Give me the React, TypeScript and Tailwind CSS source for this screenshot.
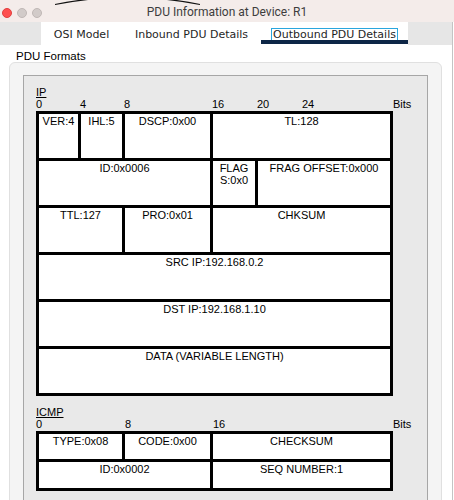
import React from "react";

function Cell({ className = "", children }: { className?: string; children?: React.ReactNode }) {
  return (
    <div className={`bg-white text-center text-[11px] leading-[11px] pt-[2px] text-black whitespace-nowrap ${className}`}>
      {children}
    </div>
  );
}

export default function App() {
  return (
    <div className="w-[454px] h-[500px] overflow-hidden bg-white relative font-['Liberation_Sans',Arial,sans-serif]">
      {/* Title bar */}
      <div className="h-[22px] bg-[#f4ecea] grid grid-cols-[1fr_auto_1fr] items-center">
        <div className="flex gap-[5px] pl-[2px] pt-[3px]">
          <span className="w-[10px] h-[10px] rounded-full bg-[#fe5050] border border-[#e2403f]" />
          <span className="w-[10px] h-[10px] rounded-full bg-[#d2cbc9] border border-[#c0b8b6]" />
          <span className="w-[10px] h-[10px] rounded-full bg-[#d2cbc9] border border-[#c0b8b6]" />
        </div>
        <div className="text-[12px] leading-[14px] text-[#3d3d3d] font-['Roboto',Arial,sans-serif] pt-[1px]">
          PDU Information at Device: R1
        </div>
        <div />
      </div>
      <svg className="absolute top-0 left-0 pointer-events-none" width="454" height="8" viewBox="0 0 454 8">
        <path d="M55 4.5 Q127.5 -10 200 4.5" fill="none" stroke="#111" strokeWidth="1.2" />
      </svg>

      <div className="flex h-[478px]">
        <div className="w-[452px] flex flex-col">
          {/* Tabs */}
          <div className="h-[23px] bg-[#e6e6e6] flex pl-[41px] font-['DejaVu_Sans',Verdana,sans-serif] text-[11px] text-[#1f1f1f]">
            <div className="flex bg-white">
              <div className="w-[81px] flex flex-col items-center pt-[6px]">
                <span className="leading-[13px]">OSI Model</span>
              </div>
              <div className="w-[139px] flex flex-col items-center pt-[6px]">
                <span className="leading-[13px]">Inbound PDU Details</span>
              </div>
              <div className="w-[147px] flex flex-col items-center pt-[7px]">
                <span className="leading-[11px] h-[11px] px-[1px] outline outline-1 outline-[#2aa6de]">Outbound PDU Details</span>
                <div className="mt-auto mb-[1px] w-full h-[4px] bg-[#0d2646]" />
              </div>
            </div>
          </div>

          {/* Content */}
          <div className="pt-[6px] flex-1 flex flex-col">
            <div className="pl-[16px] text-[11.5px] leading-[11px] h-[11px] text-black">PDU Formats</div>
            <div className="ml-[9px] w-[433px] flex-1 rounded-t-[6px] border border-[#e0e0e0] bg-[#f4f4f4] pt-[12px] px-[13px]">
              <div className="h-[500px] border border-[#a6a6a6] bg-[#e9e9e9] pt-[10px] pl-[12px] text-black">
                {/* IP */}
                <div className="text-[11px] leading-[12px] h-[12px] underline">IP</div>
                <div className="flex text-[11px] leading-[13px] h-[13px]">
                  <span className="w-[44px]">0</span>
                  <span className="w-[44px]">4</span>
                  <span className="w-[88px]">8</span>
                  <span className="w-[45px]">16</span>
                  <span className="w-[45px]">20</span>
                  <span className="w-[91px]">24</span>
                  <span>Bits</span>
                </div>
                <div className="w-[357px] bg-black p-[3px] flex flex-col gap-[3px]">
                  <div className="flex gap-[3px] h-[44px]">
                    <Cell className="w-[39px]">VER:4</Cell>
                    <Cell className="w-[41px]">IHL:5</Cell>
                    <Cell className="w-[85px]">DSCP:0x00</Cell>
                    <Cell className="flex-1">TL:128</Cell>
                  </div>
                  <div className="flex gap-[3px] h-[44px]">
                    <Cell className="w-[171px]">ID:0x0006</Cell>
                    <div className="w-[42px] bg-white text-center text-[11px] leading-[12px] pt-[1px]">
                      FLAG
                      <br />
                      S:0x0
                    </div>
                    <Cell className="flex-1">FRAG OFFSET:0x000</Cell>
                  </div>
                  <div className="flex gap-[3px] h-[44px]">
                    <Cell className="w-[83px]">TTL:127</Cell>
                    <Cell className="w-[85px]">PRO:0x01</Cell>
                    <Cell className="flex-1">CHKSUM</Cell>
                  </div>
                  <div className="flex h-[44px]">
                    <Cell className="flex-1">SRC IP:192.168.0.2</Cell>
                  </div>
                  <div className="flex h-[44px]">
                    <Cell className="flex-1">DST IP:192.168.1.10</Cell>
                  </div>
                  <div className="flex h-[44px]">
                    <Cell className="flex-1">DATA (VARIABLE LENGTH)</Cell>
                  </div>
                </div>

                {/* ICMP */}
                <div className="mt-[10px] text-[11px] leading-[12px] h-[12px] underline">ICMP</div>
                <div className="flex text-[11px] leading-[13px] h-[13px]">
                  <span className="w-[89px]">0</span>
                  <span className="w-[88px]">8</span>
                  <span className="w-[180px]">16</span>
                  <span>Bits</span>
                </div>
                <div className="w-[357px] bg-black p-[3px] flex flex-col gap-[3px]">
                  <div className="flex gap-[3px] h-[25px]">
                    <Cell className="w-[83px]">TYPE:0x08</Cell>
                    <Cell className="w-[85px]">CODE:0x00</Cell>
                    <Cell className="flex-1">CHECKSUM</Cell>
                  </div>
                  <div className="flex gap-[3px] h-[26px]">
                    <Cell className="w-[171px]">ID:0x0002</Cell>
                    <Cell className="flex-1">SEQ NUMBER:1</Cell>
                  </div>
                </div>
              </div>
            </div>
          </div>
        </div>
        <div className="w-px bg-[#c4c4c4]" />
        <div className="w-px bg-white" />
      </div>
    </div>
  );
}
